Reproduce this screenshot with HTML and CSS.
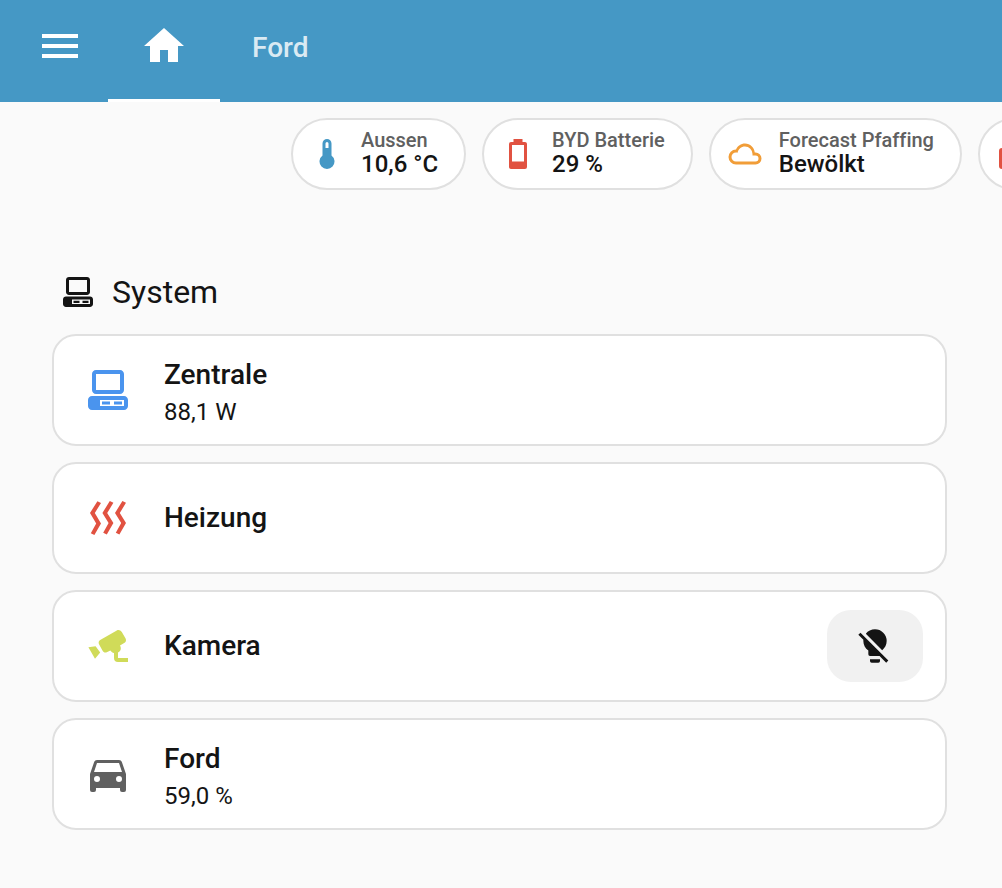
FILE: index.html
```
<!DOCTYPE html>
<html lang="de">
<head>
<meta charset="utf-8">
<meta name="viewport" content="width=device-width, initial-scale=1">
<title>System</title>
<link rel="stylesheet" href="styles.css">
</head>
<body>
<header class="toolbar">
  <button class="menu" type="button" aria-label="Menü">
    <svg class="icon" viewBox="0 0 24 24"><path d="M3,6H21V8H3V6M3,11H21V13H3V11M3,16H21V18H3V16Z"/></svg>
  </button>
  <nav class="tabs">
    <a class="tab tab-active" href="#home" aria-label="Home">
      <svg class="icon" viewBox="0 0 24 24"><path d="M10,20V14H14V20H19V12H22L12,3L2,12H5V20H10Z"/></svg>
    </a>
    <a class="tab tab-text" href="#ford">Ford</a>
  </nav>
</header>

<main class="view">
  <div class="badges">
    <button class="badge" type="button">
      <svg class="icon-small blue" viewBox="0 0 24 24"><path d="M15 13V5A3 3 0 0 0 9 5V13A5 5 0 1 0 15 13M12 4A1 1 0 0 1 13 5V8H11V5A1 1 0 0 1 12 4Z"/></svg>
      <span class="badge-text"><span class="badge-label">Aussen</span><span class="badge-value">10,6 °C</span></span>
    </button>
    <button class="badge" type="button">
      <svg class="icon-small red" viewBox="0 0 24 24"><path d="M16 17H8V6H16M16.67 4H15V2H9V4H7.33A1.33 1.33 0 0 0 6 5.33V20.67C6 21.4 6.6 22 7.33 22H16.67A1.33 1.33 0 0 0 18 20.67V5.33C18 4.6 17.4 4 16.67 4Z"/></svg>
      <span class="badge-text"><span class="badge-label">BYD Batterie</span><span class="badge-value">29 %</span></span>
    </button>
    <button class="badge" type="button">
      <svg class="icon-small orange" viewBox="0 0 24 24"><path d="M6,19A5,5 0 0,1 1,14A5,5 0 0,1 6,9C7,6.65 9.3,5 12,5C15.43,5 18.24,7.66 18.5,11.03L19,11A4,4 0 0,1 23,15A4,4 0 0,1 19,19H6M19,13H17V12A5,5 0 0,0 12,7C9.5,7 7.45,8.82 7.06,11.19C6.73,11.07 6.37,11 6,11A3,3 0 0,0 3,14A3,3 0 0,0 6,17H19A2,2 0 0,0 21,15A2,2 0 0,0 19,13Z"/></svg>
      <span class="badge-text"><span class="badge-label">Forecast Pfaffing</span><span class="badge-value">Bewölkt</span></span>
    </button>
    <button class="badge" type="button" aria-label="Status">
      <svg class="icon-small red" viewBox="0 0 24 24"><path d="M4,8H20A2,2 0 0,1 22,10V20A2,2 0 0,1 20,22H4A2,2 0 0,1 2,20V10A2,2 0 0,1 4,8Z"/></svg>
    </button>
  </div>

  <section class="section">
    <h2 class="heading">
      <svg class="icon-small" viewBox="0 0 24 24"><path fill-rule="evenodd" d="M6,2C4.89,2 4,2.89 4,4V12C4,13.11 4.89,14 6,14H18C19.11,14 20,13.11 20,12V4C20,2.89 19.11,2 18,2H6M6,4H18V12H6V4M4,15C2.89,15 2,15.89 2,17V20C2,21.11 2.89,22 4,22H20C21.11,22 22,21.11 22,20V17C22,15.89 21.11,15 20,15H4M8,17H20V20H8V17M9,17.75V19.25H13V17.75H9M15,17.75V19.25H19V17.75H15Z"/></svg>
      System
    </h2>
    <div class="cards">
      <article class="card">
        <svg class="icon azure" viewBox="0 0 24 24"><path fill-rule="evenodd" d="M6,2C4.89,2 4,2.89 4,4V12C4,13.11 4.89,14 6,14H18C19.11,14 20,13.11 20,12V4C20,2.89 19.11,2 18,2H6M6,4H18V12H6V4M4,15C2.89,15 2,15.89 2,17V20C2,21.11 2.89,22 4,22H20C21.11,22 22,21.11 22,20V17C22,15.89 21.11,15 20,15H4M8,17H20V20H8V17M9,17.75V19.25H13V17.75H9M15,17.75V19.25H19V17.75H15Z"/></svg>
        <div class="info info-detail"><h3 class="name">Zentrale</h3><p class="state">88,1 W</p></div>
      </article>
      <article class="card">
        <svg class="icon red" viewBox="0 0 24 24"><path d="M8.5 4.5L5.4 9.5L8.5 14.7L5.2 20.5L3.4 19.6L6.1 14.7L3 9.5L6.7 3.6L8.5 4.5M14.7 4.4L11.6 9.5L14.7 14.5L11.4 20.3L9.6 19.4L12.3 14.5L9.2 9.5L12.9 3.5L14.7 4.4M21 4.4L17.9 9.5L21 14.5L17.7 20.3L15.9 19.4L18.6 14.5L15.5 9.5L19.2 3.5L21 4.4"/></svg>
        <div class="info"><h3 class="name">Heizung</h3></div>
      </article>
      <article class="card">
        <svg class="icon lime" viewBox="0 0 24 24"><path d="M16.4,4.2L8.1,9C7.4,9.4 7.1,10.3 7.5,11.1L9.3,14.4C9.7,15.2 10.6,15.5 11.4,15.1L13.2,14.2C13.5,14.8 14.2,15.3 15,15.5V18A2,2 0 0,0 17,20H22V18H17V15.3C17.9,14.8 18.5,14 18.4,13C18.4,12.6 18.2,12.2 18,11.8L20.3,10.4C21,10 21.2,9.1 20.8,8.3L18.9,5C18.3,4.1 17.3,3.7 16.4,4.2M5.8,12.1L2.2,12.6L5.5,18.4L8.1,15.2L5.8,12.1Z"/></svg>
        <div class="info"><h3 class="name">Kamera</h3></div>
        <button class="action" type="button" aria-label="Licht aus">
          <svg class="icon-medium" viewBox="0 0 24 24"><path d="M12,2C9.76,2 7.78,3.05 6.5,4.68L16.31,14.5C17.94,13.21 19,11.24 19,9A7,7 0 0,0 12,2M3.28,4L2,5.27L5.04,8.3C5,8.53 5,8.76 5,9C5,11.38 6.19,13.47 8,14.74V17A1,1 0 0,0 9,18H14.73L18.73,22L20,20.72L3.28,4M9,20V21A1,1 0 0,0 10,22H14A1,1 0 0,0 15,21V20H9Z"/></svg>
        </button>
      </article>
      <article class="card">
        <svg class="icon gray" viewBox="0 0 24 24"><path d="M5,11L6.5,6.5H17.5L19,11M17.5,16A1.5,1.5 0 0,1 16,14.5A1.5,1.5 0 0,1 17.5,13A1.5,1.5 0 0,1 19,14.5A1.5,1.5 0 0,1 17.5,16M6.5,16A1.5,1.5 0 0,1 5,14.5A1.5,1.5 0 0,1 6.5,13A1.5,1.5 0 0,1 8,14.5A1.5,1.5 0 0,1 6.5,16M18.92,6C18.72,5.42 18.16,5 17.5,5H6.5C5.84,5 5.28,5.42 5.08,6L3,12V20A1,1 0 0,0 4,21H5A1,1 0 0,0 6,20V19H18V20A1,1 0 0,0 19,21H20A1,1 0 0,0 21,20V12L18.92,6Z"/></svg>
        <div class="info info-detail"><h3 class="name">Ford</h3><p class="state">59,0 %</p></div>
      </article>
    </div>
  </section>
</main>
</body>
</html>
```

FILE: styles.css
```
* {
  box-sizing: border-box;
}

body {
  margin: 0;
  background: #fafafa;
  color: #141414;
  font-family: Roboto, "Liberation Sans", sans-serif;
  font-variant-ligatures: none;
}

button {
  border: 0;
  background: none;
  color: inherit;
  font: inherit;
  cursor: pointer;
}

svg {
  display: block;
  flex: none;
  fill: currentColor;
}

.icon {
  width: 48px;
  height: 48px;
}

.icon-medium {
  width: 40px;
  height: 40px;
}

.icon-small {
  width: 36px;
  height: 36px;
}

.blue { color: #4598c5; }
.azure { color: #4a94ee; }
.red { color: #e15241; }
.orange { color: #f19d38; }
.lime { color: #d0db59; }
.gray { color: #606060; }

.toolbar {
  display: flex;
  height: 102px;
  padding-left: 24px;
  background: #4598c5;
  color: #fff;
}

.menu {
  padding: 0 12px 10px;
}

.tabs {
  display: flex;
  margin-left: 12px;
}

.tab {
  display: flex;
  align-items: center;
  padding: 0 32px 7px;
  border-bottom: 3px solid transparent;
  color: #daeaf3;
  font-size: 28px;
  font-weight: 500;
  text-decoration: none;
}

.tab-active {
  border-bottom-color: #fff;
  color: #fff;
}

.tab-text {
  padding-bottom: 5px;
}

.badges {
  display: flex;
  gap: 16px;
  padding: 16px 0 16px 291px;
  overflow: hidden;
}

.badge {
  display: flex;
  flex: none;
  align-items: center;
  gap: 16px;
  height: 72px;
  padding: 0 26px 0 16px;
  border: 2px solid #e0e0e0;
  border-radius: 36px;
  background: #fff;
  text-align: left;
  font-weight: 500;
  font-variant-ligatures: none;
}

.badge-text {
  display: flex;
  flex-direction: column;
}

.badge-label {
  color: #606060;
  font-size: 20px;
  line-height: 20px;
}

.badge-value {
  font-size: 24px;
  line-height: 28px;
}

.section {
  padding: 64px 55px 58px 52px;
}

.heading {
  display: flex;
  align-items: center;
  gap: 16px;
  margin: 0 0 20px;
  padding-left: 8px;
  font-size: 32px;
  font-weight: 400;
  line-height: 44px;
}

.cards {
  display: grid;
  gap: 16px;
}

.card {
  display: flex;
  align-items: center;
  gap: 32px;
  min-height: 112px;
  padding: 15px 22px 15px 30px;
  border: 2px solid #e0e0e0;
  border-radius: 24px;
  background: #fff;
}

.info {
  flex: 1;
}

.info-detail {
  padding-top: 4px;
}

.name {
  margin: 0;
  font-size: 28px;
  font-weight: 500;
  line-height: 40px;
}

.state {
  margin: 0;
  font-size: 24px;
  line-height: 34px;
}

.action {
  display: grid;
  place-items: center;
  width: 96px;
  height: 72px;
  padding: 0;
  border-radius: 24px;
  background: #f1f1f1;
}
```
